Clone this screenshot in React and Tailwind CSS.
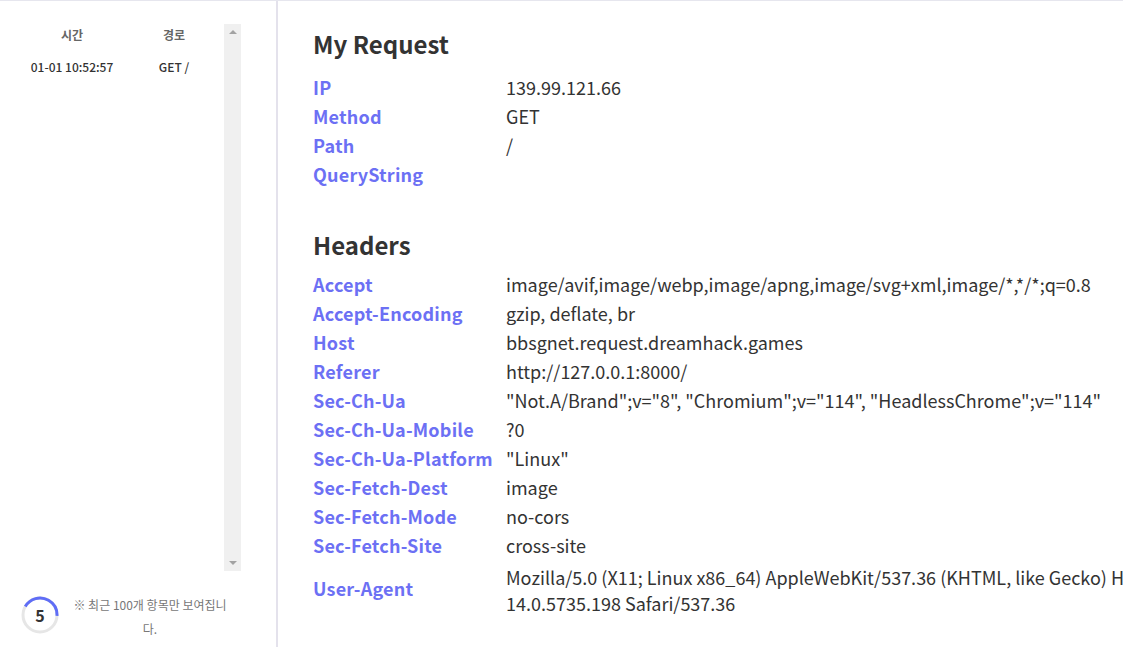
const requestRows = [
  ["IP", "139.99.121.66"],
  ["Method", "GET"],
  ["Path", "/"],
  ["QueryString", ""],
];

const headerRows = [
  ["Accept", "image/avif,image/webp,image/apng,image/svg+xml,image/*,*/*;q=0.8"],
  ["Accept-Encoding", "gzip, deflate, br"],
  ["Host", "bbsgnet.request.dreamhack.games"],
  ["Referer", "http://127.0.0.1:8000/"],
  ["Sec-Ch-Ua", "\"Not.A/Brand\";v=\"8\", \"Chromium\";v=\"114\", \"HeadlessChrome\";v=\"114\""],
  ["Sec-Ch-Ua-Mobile", "?0"],
  ["Sec-Ch-Ua-Platform", "\"Linux\""],
  ["Sec-Fetch-Dest", "image"],
  ["Sec-Fetch-Mode", "no-cors"],
  ["Sec-Fetch-Site", "cross-site"],
];

const Row = ({ name, value }) => (
  <div className="flex leading-[29px]">
    <div className="w-[193px] shrink-0 font-bold tracking-[0.2px] text-[#6c70f4]">{name}</div>
    <div className="whitespace-nowrap text-[#333]">{value}</div>
  </div>
);

const Timer = () => (
  <div className="relative h-[38px] w-[38px] shrink-0">
    <svg width="38" height="38" viewBox="0 0 38 38" className="absolute inset-0">
      <circle cx="19" cy="19" r="17" fill="none" stroke="#e6e6e6" strokeWidth="3" />
      <circle
        cx="19"
        cy="19"
        r="17"
        fill="none"
        stroke="#5f6df6"
        strokeWidth="3"
        strokeDasharray="45 107"
        transform="rotate(-150 19 19)"
      />
    </svg>
    <span className="absolute inset-0 flex items-center justify-center text-[16px] font-bold text-[#333]">
      5
    </span>
  </div>
);

export default function App() {
  return (
    <div
      className="flex h-[647px] w-[1123px] overflow-hidden border-t border-[#e6e6ee] bg-white"
      style={{ fontFamily: '"Noto Sans CJK KR", "Noto Sans", sans-serif' }}
    >
      <aside className="flex w-[278px] shrink-0 flex-col border-r-2 border-[#e4e2ec]">
        <div className="flex pt-[23px]">
          <div className="h-[547px] w-[224px] pl-[20px]">
            <div className="flex text-[12px] leading-[20px]">
              <div className="w-[104px] pt-[1px] text-center font-bold text-[#666]">시간</div>
              <div className="w-[100px] pt-[1px] text-center font-bold text-[#666]">경로</div>
            </div>
            <div className="mt-[12px] flex text-[12px] leading-[20px] text-[#333]">
              <div className="w-[104px] text-center font-medium">01-01 10:52:57</div>
              <div className="w-[100px] text-center font-medium">GET /</div>
            </div>
          </div>
          <div className="flex h-[547px] w-[17px] flex-col items-center justify-between bg-[#f0f0f0] py-[6px]">
            <div className="h-0 w-0 border-x-[4px] border-b-[4px] border-x-transparent border-b-[#a3a3a3]" />
            <div className="h-0 w-0 border-x-[4px] border-t-[4px] border-x-transparent border-t-[#a3a3a3]" />
          </div>
        </div>
        <div className="mt-[25px] flex items-start pl-[21px]">
          <Timer />
          <p className="ml-[13px] mt-[-3px] w-[156px] text-center text-[12px] leading-[24px] text-[#777]">
            ※ 최근 100개 항목만 보여집니다.
          </p>
        </div>
      </aside>

      <main className="flex-1 pl-[35px] pt-[25px] text-[18px]">
        <h2 className="mb-[11px] text-[24px] font-bold leading-[36px] text-[#333]">My Request</h2>
        {requestRows.map(([k, v]) => (
          <Row key={k} name={k} value={v} />
        ))}

        <h2 className="mb-[7px] mt-[38px] text-[24px] font-bold leading-[36px] text-[#333]">Headers</h2>
        {headerRows.map(([k, v]) => (
          <Row key={k} name={k} value={v} />
        ))}
        <div className="flex items-center pb-[1px] pt-[4px]">
          <div className="w-[193px] shrink-0 pb-[4px] font-bold tracking-[0.2px] text-[#6c70f4]">User-Agent</div>
          <div className="whitespace-nowrap leading-[26px] text-[#333]">
            <div>Mozilla/5.0 (X11; Linux x86_64) AppleWebKit/537.36 (KHTML, like Gecko) HeadlessChrome/1</div>
            <div>14.0.5735.198 Safari/537.36</div>
          </div>
        </div>
      </main>
    </div>
  );
}
